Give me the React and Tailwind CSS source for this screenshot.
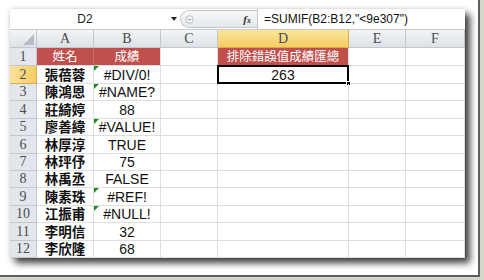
import React from 'react';

const rows = [
  { name: '張蓓蓉', score: '#DIV/0!', flag: true, h: 'h-[18px]' },
  { name: '陳鴻恩', score: '#NAME?', flag: true, h: 'h-[17px]' },
  { name: '莊綺婷', score: '88', flag: false, h: 'h-[18px]' },
  { name: '廖善緯', score: '#VALUE!', flag: true, h: 'h-[17px]' },
  { name: '林厚淳', score: 'TRUE', flag: false, h: 'h-[18px]' },
  { name: '林玶伃', score: '75', flag: false, h: 'h-[17px]' },
  { name: '林禹丞', score: 'FALSE', flag: false, h: 'h-[17px]' },
  { name: '陳素珠', score: '#REF!', flag: true, h: 'h-[18px]' },
  { name: '江振甫', score: '#NULL!', flag: true, h: 'h-[17px]' },
  { name: '李明信', score: '32', flag: false, h: 'h-[18px]' },
  { name: '李欣隆', score: '68', flag: false, h: 'h-[17px]' },
];

const cell = 'flex items-center justify-center leading-none border-r border-b border-[#dcdee0]';
const cjk = "font-['Noto_Sans_CJK_TC',sans-serif]";
const sans = "font-['Liberation_Sans',Arial,sans-serif]";
const head = "font-['Liberation_Serif',serif] text-[14px] leading-none text-[#4a4d52]";

function ColHead({ w, label, active }) {
  return (
    <div
      className={`${w} flex items-center justify-center border-r border-b ${head} ${
        active
          ? 'bg-gradient-to-b from-[#fbe59a] to-[#f5cd62] border-[#d9ad4f]'
          : 'bg-gradient-to-b from-[#f3f5f7] to-[#dde1e6] border-[#c3c8ce]'
      }`}
    >
      {label}
    </div>
  );
}

function RowHead({ n, active }) {
  return (
    <div
      className={`w-[27px] flex items-center justify-center border-r border-b ${head} ${
        active
          ? 'bg-gradient-to-r from-[#fbe29a] to-[#f5cd62] border-[#d9ad4f]'
          : 'bg-[#e3e7eb] border-[#c3c8ce]'
      }`}
    >
      {n}
    </div>
  );
}

export default function App() {
  return (
    <div className="w-[484px] h-[280px] bg-[#d6d7cb] overflow-hidden">
      <div className="w-[480px] h-[277px] bg-white border-r-2 border-b-2 border-[#5f605a] pl-[10px] pt-[9px]">
        <div className="w-[455px] h-[249px] bg-white flex flex-col shadow-[5px_5px_7px_rgba(0,0,0,0.75),0_0_5px_rgba(0,0,0,0.15)]">
          {/* formula bar */}
          <div className="h-[21px] flex border-b border-[#c9cdd2] bg-white">
            <div className="w-[170px] flex items-center relative">
              <span className={`${sans} text-[12px] text-[#222] w-full text-center pr-[20px]`}>D2</span>
              <span className="absolute right-[3px] top-[8px] w-0 h-0 border-l-[3px] border-r-[3px] border-t-[4px] border-l-transparent border-r-transparent border-t-[#222]" />
            </div>
            <div className="w-[77px] my-[1px] rounded-l-full border border-r-0 border-[#c4c8cc] bg-gradient-to-b from-[#f7f8f9] to-[#e6e9ec] flex items-center justify-between pl-[4px] pr-[6px]">
              <svg width="9" height="9" viewBox="0 0 9 9">
                <circle cx="4.5" cy="4.5" r="3.8" fill="#f4f5f6" stroke="#b9bec4" strokeWidth="1" />
                <line x1="2.8" y1="4.5" x2="6.2" y2="4.5" stroke="#9aa0a6" strokeWidth="1" />
              </svg>
              <span className="font-['Liberation_Serif',serif] italic font-bold text-[11px] text-[#333]">
                f<span className="text-[8px]">x</span>
              </span>
            </div>
            <div className="flex-1 flex items-center border-l border-[#c4c8cc] pl-[6px]">
              <span className={`${sans} text-[12px] text-[#111]`}>=SUMIF(B2:B12,"&lt;9e307")</span>
            </div>
          </div>

          {/* column headers */}
          <div className="h-[18px] flex">
            <div className="w-[27px] relative border-r border-b border-[#c3c8ce] bg-gradient-to-b from-[#f3f5f7] to-[#dde1e6]">
              <svg className="absolute right-[2px] bottom-[2px]" width="11" height="11" viewBox="0 0 11 11">
                <polygon points="11,0 11,11 0,11" fill="#b8bdc3" />
              </svg>
            </div>
            <ColHead w="w-[57px]" label="A" />
            <ColHead w="w-[67px]" label="B" />
            <ColHead w="w-[57px]" label="C" />
            <ColHead w="w-[131px]" label="D" active />
            <ColHead w="w-[57px]" label="E" />
            <ColHead w="w-[59px]" label="F" />
          </div>

          {/* row 1 */}
          <div className="h-[18px] flex">
            <RowHead n="1" />
            <div className={`w-[57px] ${cell} bg-[#c0504d] border-r-[#cb6c69] ${cjk} text-[12.5px] text-white`}>姓名</div>
            <div className={`w-[67px] ${cell} bg-[#c0504d] ${cjk} text-[12.5px] text-white`}>成績</div>
            <div className={`w-[57px] ${cell}`} />
            <div className={`w-[131px] ${cell} bg-[#c0504d] border-b-[#3f9ea6] ${cjk} text-[12.5px] text-white`}>排除錯誤值成績匯總</div>
            <div className={`w-[57px] ${cell}`} />
            <div className={`w-[59px] ${cell}`} />
          </div>

          {rows.map((r, i) => (
            <div key={i} className={`${r.h} flex`}>
              <RowHead n={i + 2} active={i === 0} />
              <div className={`w-[57px] ${cell} ${cjk} font-bold text-[13.5px] text-[#111]`}>{r.name}</div>
              <div className={`w-[67px] ${cell} relative ${sans} text-[14px] text-[#111]`}>
                {r.flag && (
                  <span className="absolute left-0 top-0 w-0 h-0 border-t-[5px] border-r-[5px] border-t-[#218b21] border-r-transparent" />
                )}
                {r.score}
              </div>
              <div className={`w-[57px] ${cell}`} />
              <div className={`w-[131px] ${cell} relative ${sans} text-[14px] text-[#111]`}>
                {i === 0 && (
                  <>
                    <span className="absolute -left-[1px] -top-[1px] -right-[1px] -bottom-[1px] border-2 border-black" />
                    <span className="absolute -right-[3px] -bottom-[3px] w-[5px] h-[5px] bg-black border border-white" />
                    <span className="relative">263</span>
                  </>
                )}
              </div>
              <div className={`w-[57px] ${cell}`} />
              <div className={`w-[59px] ${cell}`} />
            </div>
          ))}
        </div>
      </div>
    </div>
  );
}
